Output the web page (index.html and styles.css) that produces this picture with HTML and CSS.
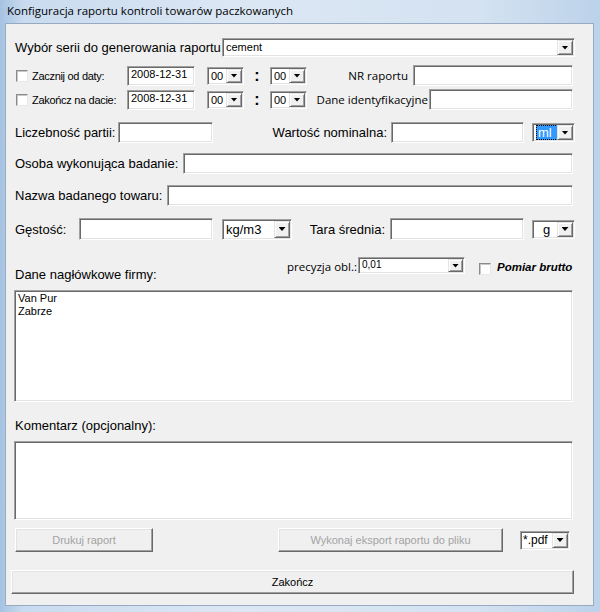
FILE: index.html
```html
<!DOCTYPE html>
<html lang="pl">
<head>
    <meta charset="UTF-8">
    <meta name="viewport" content="width=device-width, initial-scale=1.0">
    <title>Konfiguracja raportu kontroli towarów paczkowanych</title>
    <link rel="stylesheet" href="styles.css">
</head>
<body>
    <div class="window">
        <div class="titlebar">Konfiguracja raportu kontroli towarów paczkowanych</div>
        <div class="client">

            <div class="row r-serie">
                <span class="lbl l-serie">Wybór serii do generowania raportu</span>
                <div class="combo c-serie"><span class="combo-text">cement</span><span class="drop"></span></div>
            </div>

            <div class="row r-od">
                <div class="chk-group"><span class="chk"></span><span class="chk-lbl">Zacznij od daty:</span></div>
                <div class="field f-date">2008-12-31</div>
                <div class="combo c-time c-hour"><span class="combo-text">00</span><span class="drop"></span></div>
                <span class="colon">:</span>
                <div class="combo c-time"><span class="combo-text">00</span><span class="drop"></span></div>
                <span class="seg l-nr">NR raportu</span>
                <div class="field f-nr"></div>
            </div>

            <div class="row r-do">
                <div class="chk-group"><span class="chk"></span><span class="chk-lbl">Zakończ na dacie:</span></div>
                <div class="field f-date">2008-12-31</div>
                <div class="combo c-time c-hour"><span class="combo-text">00</span><span class="drop"></span></div>
                <span class="colon">:</span>
                <div class="combo c-time"><span class="combo-text">00</span><span class="drop"></span></div>
                <span class="seg l-dane">Dane identyfikacyjne</span>
                <div class="field f-dane"></div>
            </div>

            <div class="row r-partia">
                <span class="lbl l-partia">Liczebność partii:</span>
                <div class="field f-partia"></div>
                <span class="lbl l-nom">Wartość nominalna:</span>
                <div class="field f-nom"></div>
                <div class="combo c-unit"><span class="combo-text"><span class="sel">ml</span></span><span class="drop"></span></div>
            </div>

            <div class="row r-osoba">
                <span class="lbl l-osoba">Osoba wykonująca badanie:</span>
                <div class="field f-osoba"></div>
            </div>

            <div class="row r-towar">
                <span class="lbl l-towar">Nazwa badanego towaru:</span>
                <div class="field f-towar"></div>
            </div>

            <div class="row r-gest">
                <span class="lbl l-gest">Gęstość:</span>
                <div class="field f-gest"></div>
                <div class="combo c-kg"><span class="combo-text">kg/m3</span><span class="drop"></span></div>
                <span class="lbl l-tara">Tara średnia:</span>
                <div class="field f-tara"></div>
                <div class="combo c-unit"><span class="combo-text centered">g</span><span class="drop"></span></div>
            </div>

            <div class="row r-firma">
                <span class="lbl l-firma">Dane nagłówkowe firmy:</span>
                <span class="seg l-prec">precyzja obl.:</span>
                <div class="combo c-prec"><span class="combo-text tiny">0,01</span><span class="drop"></span></div>
                <span class="chk chk-brutto"></span>
                <span class="brutto">Pomiar brutto</span>
            </div>

            <div class="field area area-firma">Van Pur<br>Zabrze</div>

            <div class="row r-kom">
                <span class="lbl">Komentarz (opcjonalny):</span>
            </div>

            <div class="field area area-kom"></div>

            <div class="row r-akcje">
                <div class="btn disabled b-druk">Drukuj raport</div>
                <div class="btn disabled b-eksport">Wykonaj eksport raportu do pliku</div>
                <div class="combo c-pdf"><span class="combo-text">*.pdf</span><span class="drop"></span></div>
            </div>

            <div class="row r-koniec">
                <div class="btn b-koniec">Zakończ</div>
            </div>

        </div>
    </div>
</body>
</html>
```

FILE: styles.css
```css
* {
    box-sizing: border-box;
}
body {
    margin: 0;
    width: 600px;
    height: 612px;
    overflow: hidden;
    font-family: "Liberation Sans", Arial, sans-serif;
    color: #000;
}
.window {
    width: 600px;
    height: 612px;
    padding: 0 7px 7px 6px;
    background: linear-gradient(to right, #a6c2e2 0%, #c9dbef 4%, #dce7f4 40%, #d4e2f1 80%, #bcd2ea 100%);
}
.titlebar {
    height: 24px;
    line-height: 22px;
    padding-left: 1px;
    font-family: "Open Sans", "Noto Sans", sans-serif;
    font-size: 11.5px;
    color: #000;
}
.client {
    width: 587px;
    height: 581px;
    background: #f0f0f0;
    box-shadow: 0 0 0 1px #97aac2;
    padding-top: 1px;
}

/* rows */
.row {
    display: flex;
    align-items: center;
}
.r-serie { margin-top: 13px; height: 19px; }
.r-od { margin-top: 8px; height: 21px; }
.r-do { margin-top: 3px; height: 21px; }
.r-partia { margin-top: 12px; height: 21px; }
.r-osoba { margin-top: 10px; height: 21px; }
.r-towar { margin-top: 11px; height: 21px; }
.r-gest { margin-top: 12px; height: 22px; }
.r-firma { margin-top: 17px; height: 25px; align-items: flex-start; }
.r-kom { margin-top: 16px; height: 15px; }
.r-akcje { margin-top: 8px; height: 24px; }
.r-koniec { margin-top: 18px; height: 24px; }

/* labels */
.lbl {
    font-size: 13px;
    line-height: 15px;
    white-space: nowrap;
    margin-left: 9px;
}
.seg {
    font-family: "Open Sans", "Noto Sans", sans-serif;
    font-size: 11.5px;
    white-space: nowrap;
    text-align: right;
}
.l-serie { width: 207px; }
.l-nr { width: 106px; padding-right: 5px; }
.l-dane { width: 122px; padding-right: 1px; }
.l-partia { width: 103px; }
.l-nom { margin-left: 0; width: 178px; padding-right: 4px; text-align: right; }
.l-osoba { width: 168px; }
.l-towar { width: 152px; }
.l-gest { width: 64px; }
.l-tara { margin-left: 0; width: 98px; padding-right: 5px; text-align: right; }
.l-firma { width: 272px; align-self: flex-end; }
.l-prec { width: 71px; text-align: left; margin-top: 2px; }

/* sunken fields */
.field {
    background: #fff;
    border: 1px solid;
    border-color: #a0a0a0 #fff #fff #a0a0a0;
    box-shadow: inset 1px 1px 0 #696969, inset -1px -1px 0 #e3e3e3;
    font-size: 11px;
    padding: 2px 3px;
    line-height: 13px;
}
.f-date { width: 68px; height: 20px; padding-top: 1px; }
.f-nr { width: 160px; height: 21px; }
.f-dane { width: 144px; height: 21px; }
.f-partia { width: 95px; height: 21px; }
.f-nom { width: 133px; height: 21px; }
.f-osoba { width: 390px; height: 21px; }
.f-towar { width: 406px; height: 21px; }
.f-gest { width: 134px; height: 22px; }
.f-tara { width: 134px; height: 22px; }

.area {
    margin-left: 8px;
    width: 559px;
}
.area-firma { margin-top: 8px; height: 112px; padding: 1px 3px; }
.area-kom { margin-top: 8px; height: 79px; }

/* combo boxes */
.combo {
    display: flex;
    background: #fff;
    border: 1px solid;
    border-color: #a0a0a0 #fff #fff #a0a0a0;
    box-shadow: inset 1px 1px 0 #696969, inset -1px -1px 0 #e3e3e3;
    padding: 1px;
}
.combo-text {
    flex: 1;
    font-size: 11px;
    line-height: 14px;
    padding-left: 2px;
    white-space: nowrap;
    overflow: hidden;
}
.combo-text.centered { text-align: center; }
.combo-text.tiny { font-size: 10px; line-height: 12px; }
.drop {
    width: 16px;
    background: #f0f0f0;
    border: 1px solid;
    border-color: #e3e3e3 #696969 #696969 #e3e3e3;
    box-shadow: inset 1px 1px 0 #fff, inset -1px -1px 0 #a0a0a0;
    display: flex;
    align-items: center;
    justify-content: center;
}
.drop::after {
    content: "";
    width: 7px;
    height: 4px;
    background: #000;
    clip-path: polygon(0 0, 100% 0, 50% 100%);
}
.c-serie { width: 353px; height: 19px; }
.c-time { width: 37px; height: 18px; }
.c-hour { margin-left: 12px; }
.c-unit { width: 43px; height: 19px; margin-left: 8px; }
.c-kg { width: 70px; height: 21px; margin-left: 9px; }
.c-kg .combo-text { font-size: 13px; line-height: 17px; }
.c-unit .combo-text { font-size: 13px; line-height: 15px; }
.c-prec { width: 107px; height: 17px; }
.c-prec .drop { width: 15px; }
.c-pdf { width: 50px; height: 19px; margin-left: 17px; }
.c-pdf .combo-text { font-size: 12px; padding-left: 1px; }

.sel {
    display: inline-block;
    background: #3399ff;
    color: #fff;
    outline: 1px dotted #000;
    outline-offset: -1px;
    padding: 0 3px 0 2px;
    width: 22px;
}

.colon {
    width: 26px;
    text-align: center;
    font-weight: bold;
    font-size: 16px;
}

/* checkboxes */
.chk-group {
    display: flex;
    align-items: center;
    gap: 4px;
    margin-left: 10px;
    width: 111px;
}
.chk {
    width: 12px;
    height: 12px;
    background: #fff;
    border: 1px solid;
    border-color: #8a8a8a #e8e8e8 #e8e8e8 #8a8a8a;
    box-shadow: inset 1px 1px 0 #c8c8c8;
    flex: none;
}
.chk-lbl {
    font-size: 11px;
    letter-spacing: -0.3px;
    white-space: nowrap;
}
.chk-brutto { margin-left: 14px; margin-top: 6px; }
.brutto {
    margin-left: 6px;
    margin-top: 4px;
    font-size: 11.5px;
    font-weight: bold;
    font-style: italic;
    white-space: nowrap;
}

/* buttons */
.btn {
    background: #f0f0f0;
    border: 1px solid;
    border-color: #fff #696969 #696969 #fff;
    box-shadow: inset -1px -1px 0 #a0a0a0, inset 1px 1px 0 #e3e3e3;
    font-size: 11px;
    height: 24px;
    display: flex;
    align-items: center;
    justify-content: center;
}
.btn.disabled { color: #a3a3a3; }
.b-druk { margin-left: 9px; width: 138px; }
.b-eksport { margin-left: 125px; width: 225px; }
.b-koniec { margin-left: 5px; width: 563px; }
```
